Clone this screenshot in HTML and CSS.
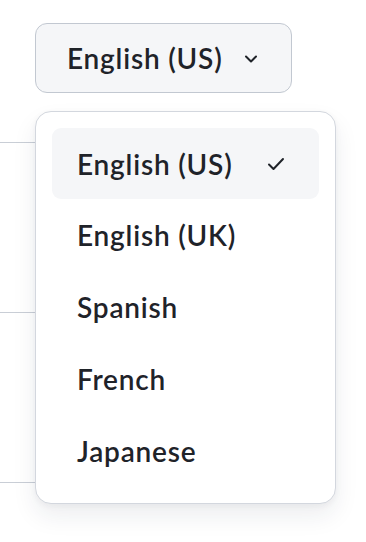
FILE: index.html
```html
<!DOCTYPE html>
<html lang="en">
<head>
  <meta charset="UTF-8">
  <title>Language select</title>
  <meta name="viewport" content="width=device-width, initial-scale=1.0">
  <link rel="stylesheet" href="styles.css">
</head>
<body>
  <div class="page">

    <!-- faint row borders of the page behind the menu -->
    <div class="rows">
      <div class="row"></div>
      <div class="row"></div>
      <div class="row"></div>
    </div>

    <div class="select">
      <button class="select-btn" type="button">
        <span>English (US)</span>
        <svg class="chevron" width="14" height="8" viewBox="0 0 14 8">
          <path d="M2 1.5 L7 6.5 L12 1.5" fill="none" stroke="#1f2329" stroke-width="2" stroke-linecap="round" stroke-linejoin="round"/>
        </svg>
      </button>

      <!-- dropdown menu -->
      <ul class="menu">
        <li class="item selected">
          <span>English (US)</span>
          <svg class="check" width="18" height="14" viewBox="0 0 18 14">
            <path d="M2 7.5 L6.5 12 L16 2" fill="none" stroke="#1f2329" stroke-width="2" stroke-linecap="round" stroke-linejoin="round"/>
          </svg>
        </li>
        <li class="item">English (UK)</li>
        <li class="item">Spanish</li>
        <li class="item">French</li>
        <li class="item">Japanese</li>
      </ul>
    </div>

  </div>
</body>
</html>
```

FILE: styles.css
```css
html, body {
  margin: 0;
  padding: 0;
  background: #fff;
}

.page {
  position: relative;
  width: 366px;
  height: 542px;
  overflow: hidden;
  font-family: Lato, "Noto Sans", sans-serif;
  color: #1f2329;
}

/* background rows: lines at 143, 313, 483 */
.rows {
  padding-top: 142px;
  width: 40px;
}
.row {
  height: 169px;
  border-top: 1px solid #c9ced6;
}

/* select wrapper sits over the rows */
.select {
  position: absolute;
  top: 23px;
  left: 35px;
}

.select-btn {
  display: flex;
  align-items: center;
  gap: 21px;
  box-sizing: border-box;
  width: 257px;
  height: 70px;
  padding: 0 0 0 31px;
  background: #f5f6f8;
  border: 1.5px solid #c2c8d1;
  border-radius: 12px;
  font-family: inherit;
  font-size: 28px;
  font-weight: 600;
  letter-spacing: 0.8px;
  color: #1f2329;
  cursor: pointer;
}
.chevron {
  margin-top: 2px;
}

/* dropdown */
.menu {
  position: absolute;
  top: 88px;
  left: 0;
  box-sizing: border-box;
  width: 301px;
  margin: 0;
  padding: 16px;
  list-style: none;
  background: #fff;
  border: 1.5px solid #d3d7de;
  border-radius: 16px;
  box-shadow: 0 12px 24px rgba(30, 40, 60, 0.08), 0 2px 6px rgba(30, 40, 60, 0.05);
}

.item {
  display: flex;
  align-items: center;
  justify-content: space-between;
  height: 72px;
  padding: 0 34px 0 25px;
  border-radius: 9px;
  font-size: 28px;
  font-weight: 600;
  letter-spacing: 0.8px;
}
.item.selected {
  height: 71px;
  background: #f5f6f8;
}
```
